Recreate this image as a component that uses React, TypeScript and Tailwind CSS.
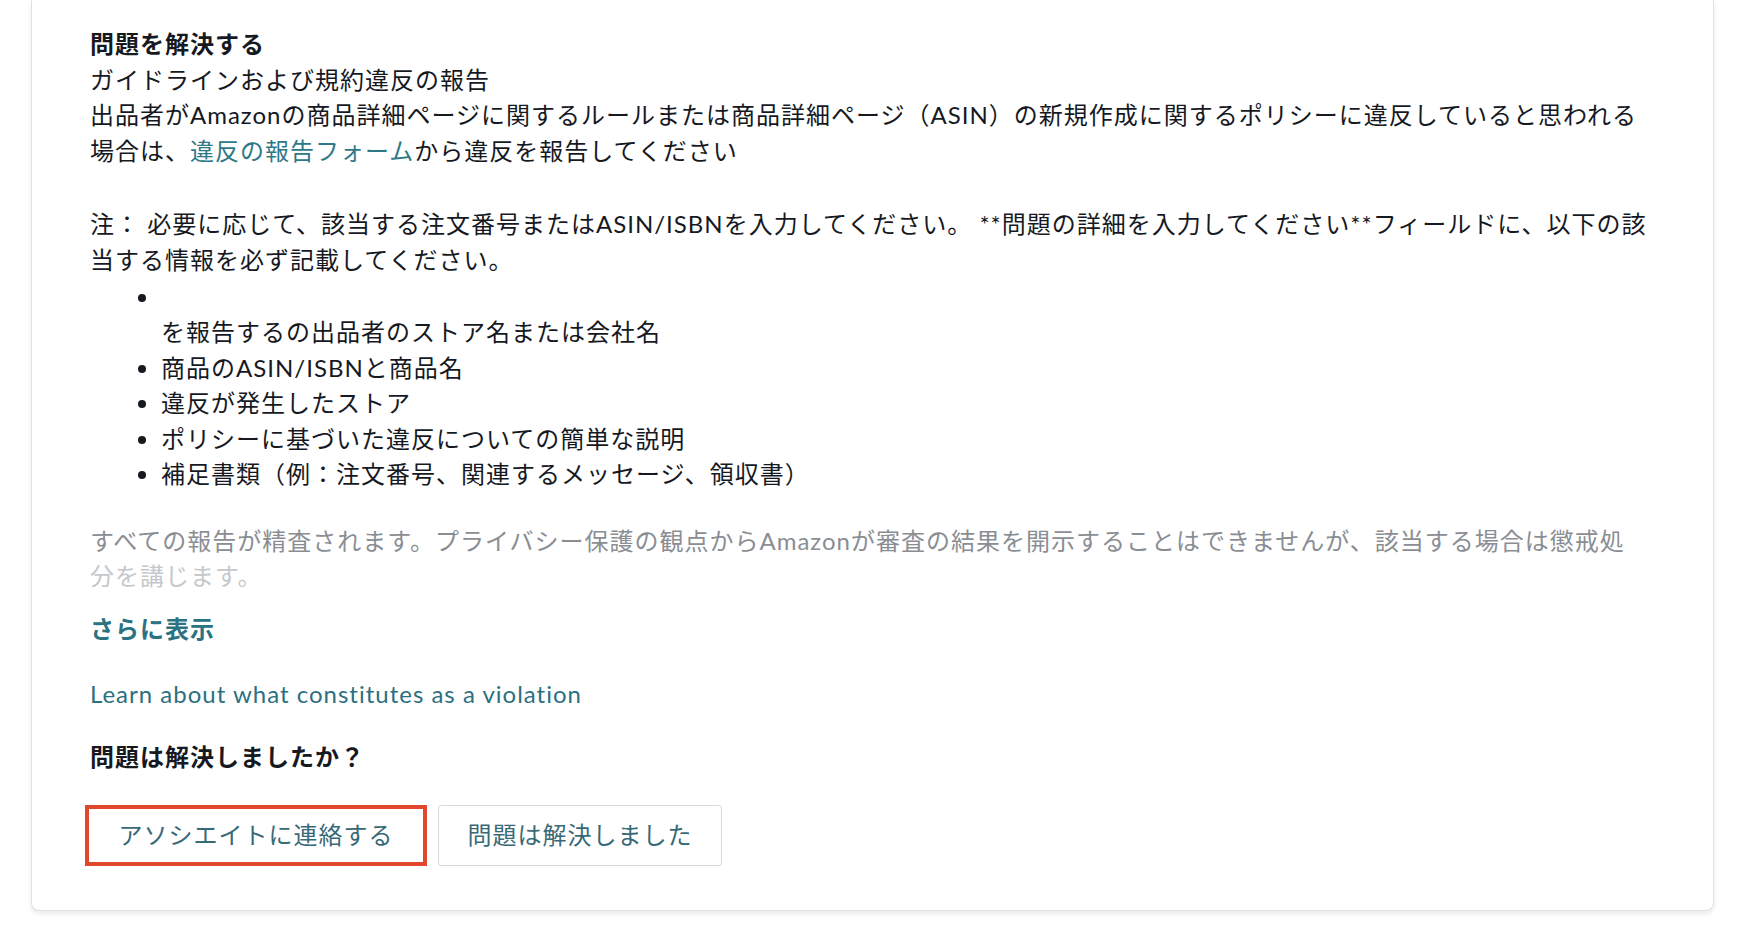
export default function App() {
  const items = [
    "商品のASIN/ISBNと商品名",
    "違反が発生したストア",
    "ポリシーに基づいた違反についての簡単な説明",
    "補足書類（例：注文番号、関連するメッセージ、領収書）",
  ];

  return (
    <div className="min-h-[940px] bg-white pl-[31px] font-['Lato','Noto_Sans_CJK_JP',sans-serif] text-[24px] leading-[35.5px] tracking-[1px] text-[#16191f]">
      <div className="w-[1683px] rounded-b-[8px] border-x border-b border-[#dfe2e2] bg-white pb-[44px] pl-[58px] pt-[26px] shadow-[0_3px_5px_rgba(0,0,0,0.08)]">
        <p className="whitespace-nowrap">
          <span className="font-bold">問題を解決する</span>
          <br />
          ガイドラインおよび規約違反の報告
          <br />
          出品者がAmazonの商品詳細ページに関するルールまたは商品詳細ページ（ASIN）の新規作成に関するポリシーに違反していると思われる
          <br />
          場合は、
          <a className="text-[#2f7888]">違反の報告フォーム</a>
          から違反を報告してください
        </p>

        <p className="mt-[38px] whitespace-nowrap">
          注： 必要に応じて、該当する注文番号またはASIN/ISBNを入力してください。 **問題の詳細を入力してください**フィールドに、以下の該
          <br />
          当する情報を必ず記載してください。
        </p>

        <ul className="mt-[1.5px] list-disc whitespace-nowrap pl-[71px]">
          <li>
            {"\u00a0"}
            <br />
            を報告するの出品者のストア名または会社名
          </li>
          {items.map((item, index) => (
            <li key={index}>{item}</li>
          ))}
        </ul>

        <p className="mt-[31px] whitespace-nowrap">
          <span className="text-[#8a8e93]">
            すべての報告が精査されます。プライバシー保護の観点からAmazonが審査の結果を開示することはできませんが、該当する場合は懲戒処
          </span>
          <br />
          <span className="text-[#c5c8cb]">分を講じます。</span>
        </p>

        <p className="mt-[17px] font-bold text-[#2b7282]">さらに表示</p>

        <p className="mt-[29.5px] text-[#2c6f7f]">Learn about what constitutes as a violation</p>

        <p className="mt-[27.5px] font-bold">問題は解決しましたか？</p>

        <div className="-ml-[5px] mt-[30.5px] flex gap-[11px]">
          <button className="h-[61px] w-[342px] border-4 border-[#e2462d] bg-white text-[#386977]">
            アソシエイトに連絡する
          </button>
          <button className="h-[61px] w-[284px] rounded-[3px] border border-[#d5d9d9] bg-white text-[#386977]">
            問題は解決しました
          </button>
        </div>
      </div>
    </div>
  );
}
